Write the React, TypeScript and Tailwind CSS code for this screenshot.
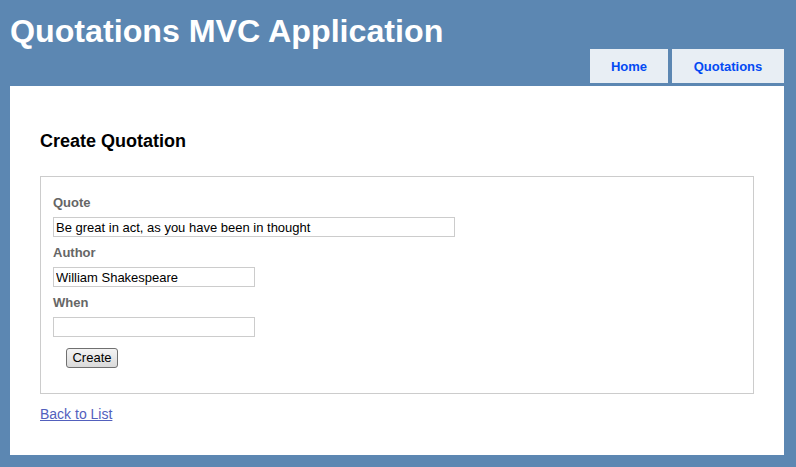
export default function App() {
  return (
    <div className="flex min-h-[467px] w-full flex-col bg-[#5c87b2] font-['Liberation_Sans',Arial,sans-serif]">
      <div className="h-[49px] pl-[10px] pt-[15px] text-[32.2px] font-bold leading-[32px] text-white">
        Quotations MVC Application
      </div>

      <nav className="flex h-[34px] justify-end gap-[4px] pr-[12px]">
        <a
          href="#"
          className="flex w-[78px] items-center justify-center bg-[#e8eef4] pt-px text-[13px] font-bold text-[#034af3]"
        >
          Home
        </a>
        <a
          href="#"
          className="flex w-[112px] items-center justify-center bg-[#e8eef4] pt-px text-[13px] font-bold text-[#034af3]"
        >
          Quotations
        </a>
      </nav>

      <main className="ml-[10px] mr-[12px] mt-[3px] h-[369px] bg-white px-[30px] pt-[44px]">
        <h2 className="mb-[24px] text-[18px] font-bold leading-[22px] text-black">
          Create Quotation
        </h2>

        <form className="border border-[#cccccc] pb-[24px] pl-[12px] pt-[18px]">
          <Field label="Quote" value="Be great in act, as you have been in thought" width="w-[402px]" />
          <Field label="Author" value="William Shakespeare" width="w-[202px]" />
          <Field label="When" value="" width="w-[202px]" />

          <button
            type="button"
            className="ml-[13px] mt-[3px] h-[20px] w-[52px] rounded-[3px] border border-[#707070] bg-gradient-to-b from-[#f4f4f4] to-[#dadada] text-[13px] leading-[18px] text-black"
          >
            Create
          </button>
        </form>

        <a href="#" className="mt-[12px] inline-block text-[14px] leading-[16px] text-[#5260bd] underline">
          Back to List
        </a>
      </main>
    </div>
  );
}

function Field({ label, value, width }: { label: string; value: string; width: string }) {
  return (
    <div className="pb-[8px]">
      <label className="mb-[6px] block text-[13px] font-bold leading-[16px] text-[#666666]">{label}</label>
      <input
        readOnly
        value={value}
        className={`${width} block h-[20px] border border-[#cccccc] px-[2px] text-[13px] leading-[18px] text-black outline-none`}
      />
    </div>
  );
}
